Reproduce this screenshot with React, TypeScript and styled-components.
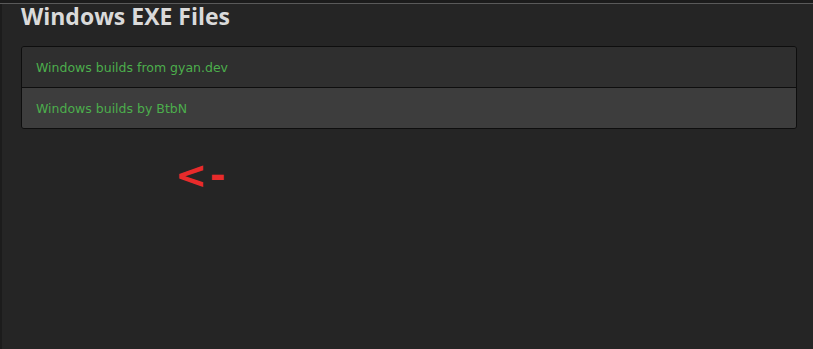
import React from 'react';
import styled, {createGlobalStyle} from 'styled-components';

const GlobalStyle = createGlobalStyle`
    html, body {
        margin: 0;
        padding: 0;
        background: #1c1c1c;
        overflow: hidden;
    }
`;

const Frame = styled.div`
    width: 813px;
    height: 349px;
    display: flex;
    flex-direction: column;
    background: #1c1c1c;
`;

const TopRule = styled.div`
    height: 3px;
    background: #1c1c1c;
    border-bottom: 1px solid #5a5a5a;
`;

const Page = styled.div`
    flex: 1;
    margin-left: 2px;
    background: #252525;
    padding: 0 16px 0 19px;
    display: flex;
    flex-direction: column;
`;

const Heading = styled.h2`
    margin: 0 0 18px 0;
    font-family: "Open Sans", "DejaVu Sans", sans-serif;
    font-weight: 700;
    font-size: 23px;
    line-height: 24px;
    color: #dadada;
`;

const LinkList = styled.div`
    display: flex;
    flex-direction: column;
    border: 1px solid #0e0e0e;
    border-radius: 3px;
    overflow: hidden;
`;

const LinkRow = styled.a<{$shade: string}>`
    display: flex;
    align-items: center;
    height: 40px;
    padding-left: 14px;
    background: ${p => p.$shade};
    color: #4cae4c;
    font-family: "DejaVu Sans", Verdana, sans-serif;
    font-size: 12.5px;
    text-decoration: none;
    & + & {
        border-top: 1px solid #0e0e0e;
    }
`;

const Pointer = styled.div`
    margin: 26px 0 0 154px;
    font-family: "DejaVu Sans", sans-serif;
    font-weight: 700;
    font-size: 38px;
    line-height: 40px;
    color: #e82b2b;
    letter-spacing: 3px;
`;

export default function App() {
    return (
        <Frame>
            <GlobalStyle />
            <TopRule />
            <Page>
                <Heading>Windows EXE Files</Heading>
                <LinkList>
                    <LinkRow href="#" $shade="#2f2f2f">Windows builds from gyan.dev</LinkRow>
                    <LinkRow href="#" $shade="#3d3d3d">Windows builds by BtbN</LinkRow>
                </LinkList>
                <Pointer>&lt;-</Pointer>
            </Page>
        </Frame>
    );
}
